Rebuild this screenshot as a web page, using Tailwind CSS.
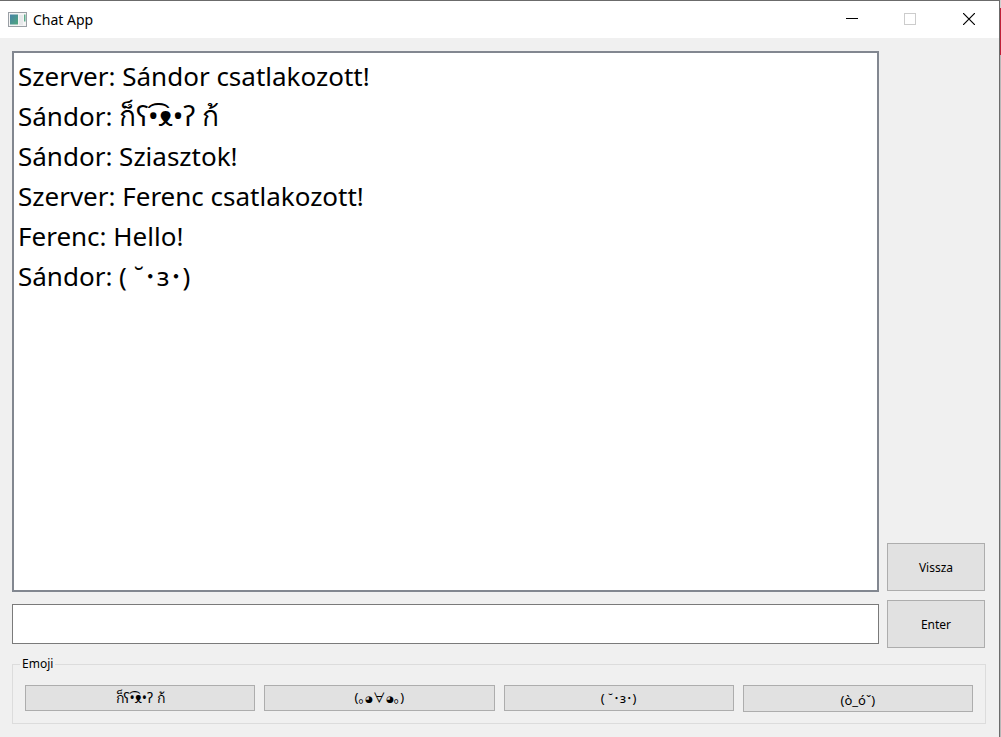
<!DOCTYPE html>
<html lang="hu">
<head>
<meta charset="utf-8">
<title>Chat App</title>
<script src="https://cdn.jsdelivr.net/npm/@tailwindcss/browser@4"></script>
</head>
<body class="flex h-screen bg-[#f0f0f0] font-['Noto_Sans','DejaVu_Sans','Noto_Sans_CJK_JP',sans-serif] text-black">
  <div class="flex min-w-0 flex-1 flex-col border-t border-r border-[#6b6b6b] bg-[#f0f0f0]">
    <header class="flex h-[37px] shrink-0 items-center bg-white pl-2">
      <svg class="h-4 w-5" viewBox="0 0 20 16" aria-hidden="true">
        <defs><linearGradient id="pane" x1="0" y1="0" x2="1" y2="1"><stop offset="0" stop-color="#4682a8"/><stop offset="1" stop-color="#4fa77b"/></linearGradient></defs>
        <rect x="0.5" y="0.5" width="18" height="14" fill="#f4f4f4" stroke="#9a9fa5"/>
        <rect x="2" y="2.500" width="8" height="10" fill="url(#pane)"/>
        <rect x="11" y="3" width="4" height="10" fill="#e6e8ea"/>
        <rect x="16" y="2.500" width="1.500" height="7" fill="#5cab8b"/>
      </svg>
      <h1 class="ml-[5px] text-sm leading-5">Chat App</h1>
      <div class="ml-auto flex h-full">
        <button class="flex w-[58px] items-center justify-center" aria-label="Minimize"><svg class="size-3" viewBox="0 0 12 12" aria-hidden="true"><path d="M0 4.500H12" stroke="#000"/></svg></button>
        <button class="flex w-[58px] items-center justify-center pb-px" aria-label="Maximize" disabled><svg class="size-3" viewBox="0 0 12 12" aria-hidden="true"><rect x="0.500" y="0.500" width="11" height="11" fill="none" stroke="#ccc"/></svg></button>
        <button class="flex w-[60px] items-center justify-center pb-px" aria-label="Close"><svg class="size-3" viewBox="0 0 12 12" aria-hidden="true"><path d="M0 0L12 12M12 0L0 12" stroke="#000" stroke-width="1.200"/></svg></button>
      </div>
    </header>
    <main class="flex min-h-0 flex-1 flex-col pt-[13px] pr-[13px] pb-[13px] pl-3">
      <div class="flex min-h-0 flex-1 gap-2">
        <div class="flex min-w-0 flex-1 flex-col gap-3 pb-1">
          <section class="min-h-0 flex-1 overflow-hidden border-2 border-[#828790] bg-white px-1 py-[3px] text-[26px] leading-10" aria-label="Chat">
            <p>Szerver: Sándor csatlakozott!</p>
            <p>Sándor: <span class="text-[28px] leading-none">ก็ʕ•͡ᴥ•ʔ ก้</span></p>
            <p>Sándor: Sziasztok!</p>
            <p>Szerver: Ferenc csatlakozott!</p>
            <p>Ferenc: Hello!</p>
            <p>Sándor: ( ˘･з･)</p>
          </section>
          <input type="text" aria-label="Message" class="h-10 w-full shrink-0 border border-[#7a7a7a] bg-white px-1 text-[26px] outline-none">
        </div>
        <div class="mr-px flex w-[98px] flex-col justify-end gap-[9px] text-xs">
          <button class="h-12 border border-[#adadad] bg-[#e1e1e1] pt-0.5">Vissza</button>
          <button class="h-12 border border-[#adadad] bg-[#e1e1e1] pt-0.5">Enter</button>
        </div>
      </div>
      <fieldset class="mt-2 h-[68px] shrink-0 border border-[#dcdcdc] px-3 text-xs">
        <legend class="-ml-[5px] px-0.5 leading-4">Emoji</legend>
        <div class="mt-[13px] grid grid-cols-4 gap-[9px] text-[13px] leading-4">
          <button class="h-[26px] border border-[#adadad] bg-[#e1e1e1] text-sm">ก็ʕ•͡ᴥ•ʔ ก้</button>
          <button class="h-[26px] border border-[#adadad] bg-[#e1e1e1]">(｡<span class="text-[9px]">◕</span><span class="font-['Noto_Sans_CJK_JP']">∀</span><span class="text-[9px]">◕</span>｡)</button>
          <button class="h-[26px] border border-[#adadad] bg-[#e1e1e1]">( ˘･з･)</button>
          <button class="h-[27px] border border-[#adadad] bg-[#e1e1e1] pt-0.5">(ò_óˇ)</button>
        </div>
      </fieldset>
    </main>
  </div>
  <div class="flex w-px shrink-0 flex-col bg-[#b8b8b8]" aria-hidden="true">
    <div class="h-2 bg-[#d0d0d0]"></div>
    <div class="h-[47px] bg-[#c01f37]"></div>
  </div>
</body>
</html>
